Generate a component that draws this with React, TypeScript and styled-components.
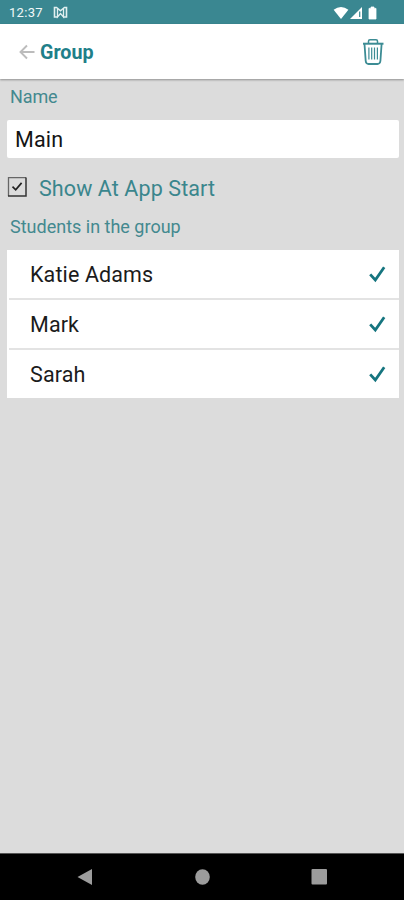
import React from "react";
import styled, { createGlobalStyle } from "styled-components";

const teal = "#1f7f89";

const GlobalStyle = createGlobalStyle`
  * { box-sizing: border-box; }
  html, body { margin: 0; padding: 0; }
  body { background: #dcdcdc; font-family: Roboto, "Liberation Sans", sans-serif; }
`;

const Screen = styled.div`
  display: flex;
  flex-direction: column;
  width: 404px;
  height: 900px;
  overflow: hidden;
  background: #dcdcdc;
`;

const StatusBar = styled.div`
  display: flex;
  align-items: center;
  flex: none;
  height: 24px;
  padding: 1px 25px 0 9px;
  background: #3a8791;
  color: #f1f8f8;
`;

const Clock = styled.span`
  width: 44px;
  font-size: 13px;
  line-height: 24px;
  letter-spacing: 0.3px;
`;

const StatusIcons = styled.div`
  display: flex;
  margin-left: auto;
`;

const Header = styled.header`
  display: flex;
  align-items: center;
  flex: none;
  height: 55px;
  padding: 0 20px 0 19px;
  background: #fff;
  box-shadow: 0 1px 2px rgba(0, 0, 0, 0.35);
`;

const Title = styled.h1`
  margin: 2px auto 0 5px;
  color: ${teal};
  font-size: 19.7px;
  font-weight: 700;
  line-height: 24px;
`;

const Form = styled.main`
  display: flex;
  flex-direction: column;
  flex: 1;
  padding: 0 5px 0 7px;
`;

const Label = styled.div<{ $top: number; $spacing: number }>`
  margin: ${(p) => p.$top}px 0 0 3px;
  color: #43898f;
  font-size: 18px;
  line-height: 22px;
  letter-spacing: ${(p) => p.$spacing}px;
`;

const Field = styled.div`
  height: 38px;
  margin-top: 12px;
  padding-left: 8px;
  border-radius: 2px;
  background: #fff;
  color: #141414;
  font-size: 21.5px;
  line-height: 40px;
  letter-spacing: 0.15px;
`;

const Option = styled.div`
  display: flex;
  align-items: center;
  height: 26px;
  margin-top: 16px;
  color: #3a868d;
  font-size: 21.5px;
  letter-spacing: 0.1px;
`;

const OptionText = styled.span`
  margin: 3px 0 0 11px;
  line-height: 26px;
`;

const List = styled.ul`
  margin: 12px 0 0;
  padding: 0;
  list-style: none;
  background: #fff;
`;

const Row = styled.li`
  display: flex;
  align-items: center;
  justify-content: space-between;
  height: 50px;
  margin-left: 2px;
  padding: 1px 13px 0 21px;
  border-bottom: 2px solid #e3e3e3;
  color: #1b1b1b;
  font-size: 21.5px;
  letter-spacing: 0.12px;

  &:last-child { height: 48px; border-bottom: 0; }
`;

const NavBar = styled.nav`
  display: flex;
  align-items: center;
  justify-content: space-between;
  flex: none;
  height: 47px;
  padding: 0 76px;
  border-top: 1px solid #555;
  background: #000;
`;

const CheckMark = () => (
  <svg width="18" height="20" viewBox="0 0 18 20" fill="none">
    <path d="M2.2 9.4 L7.3 15 L16.2 2.2" stroke="#16757f" strokeWidth="2.8" />
  </svg>
);

const CheckBox = () => (
  <svg width="21" height="22" viewBox="0 0 21 22" fill="none">
    <path d="M1.5 20V1.7H19" stroke="#666" strokeWidth="1.3" />
    <path d="M1 20H19V1.5" stroke="#333" strokeWidth="1.5" />
    <path d="M5.5 10.7L8.7 13.8L14.6 6.9" stroke="#222" strokeWidth="1.7" />
  </svg>
);

const BackArrow = () => (
  <svg width="16" height="16" viewBox="0 0 16 16" fill="none">
    <path d="M8 1.5L1.5 8L8 14.5M1.5 8H15.5" stroke="#bcbcbc" strokeWidth="1.9" />
  </svg>
);

const Trash = () => (
  <svg width="22" height="28" viewBox="0 0 22 28" fill="none" stroke="#3c8c94" strokeWidth="1.5">
    <path d="M1 5.7H21.5" strokeWidth="2" />
    <path d="M6.5 5V3.3Q6.5 1.8 8 1.8H14Q15.5 1.8 15.5 3.3V5" />
    <path d="M2.5 6L3.7 23Q4 26 6.5 26H15.5Q18 26 18.4 23L19.6 6" strokeWidth="1.8" />
    <path d="M6.9 9.5V21.5M9.7 9.5V21.5M12.5 9.5V21.5M15.4 9.5V21.5" strokeWidth="1.2" />
  </svg>
);

const MessageIcon = () => (
  <svg width="15" height="13" viewBox="0 0 15 13" fill="none" stroke="#e2f0f1" strokeWidth="1.6">
    <path d="M4.5 11H1.5V1.5H3.5L7.5 4.8L11.5 1.5H13.5V11H10.5" />
    <path d="M4.5 3V11L7.5 7.6L10.5 11V3" strokeWidth="1.3" />
  </svg>
);

const StatusGlyphs = () => (
  <svg width="46" height="16" viewBox="0 0 46 16" fill="#fff">
    <path d="M0.6 4.8Q8 -0.8 15.4 4.8L8 14Z" />
    <path d="M17 14L29 2V14Z" />
    <path d="M26.7 6.5V12" stroke="#3a8791" strokeWidth="1.2" />
    <path d="M38 2H41V3.4H43V14H36V3.4H38Z" strokeLinejoin="round" stroke="#fff" strokeWidth="0.8" />
  </svg>
);

const NavTriangle = () => (
  <svg width="17" height="18" viewBox="0 0 17 18">
    <path d="M1.5 9L16 1V17Z" fill="#9c9c9c" />
  </svg>
);

const NavCircle = () => (
  <svg width="16" height="18" viewBox="0 0 16 18">
    <ellipse cx="8.5" cy="9" rx="7.3" ry="7.8" fill="#9c9c9c" />
  </svg>
);

const NavSquare = () => (
  <svg width="17" height="18" viewBox="0 0 17 18">
    <rect x="0.5" y="1.1" width="15.5" height="15.5" rx="1" fill="#9c9c9c" />
  </svg>
);

const students = ["Katie Adams", "Mark", "Sarah"];

export default function App() {
  return (
    <>
      <GlobalStyle />
      <Screen>
        <StatusBar>
          <Clock>12:37</Clock>
          <MessageIcon />
          <StatusIcons>
            <StatusGlyphs />
          </StatusIcons>
        </StatusBar>
        <Header>
          <BackArrow />
          <Title>Group</Title>
          <Trash />
        </Header>
        <Form>
          <Label $top={7} $spacing={-0.1}>Name</Label>
          <Field>Main</Field>
          <Option role="checkbox" aria-checked="true">
            <CheckBox />
            <OptionText>Show At App Start</OptionText>
          </Option>
          <Label $top={16} $spacing={0}>Students in the group</Label>
          <List>
            {students.map((name) => (
              <Row key={name}>
                <span>{name}</span>
                <CheckMark />
              </Row>
            ))}
          </List>
        </Form>
        <NavBar>
          <NavTriangle />
          <NavCircle />
          <NavSquare />
        </NavBar>
      </Screen>
    </>
  );
}
